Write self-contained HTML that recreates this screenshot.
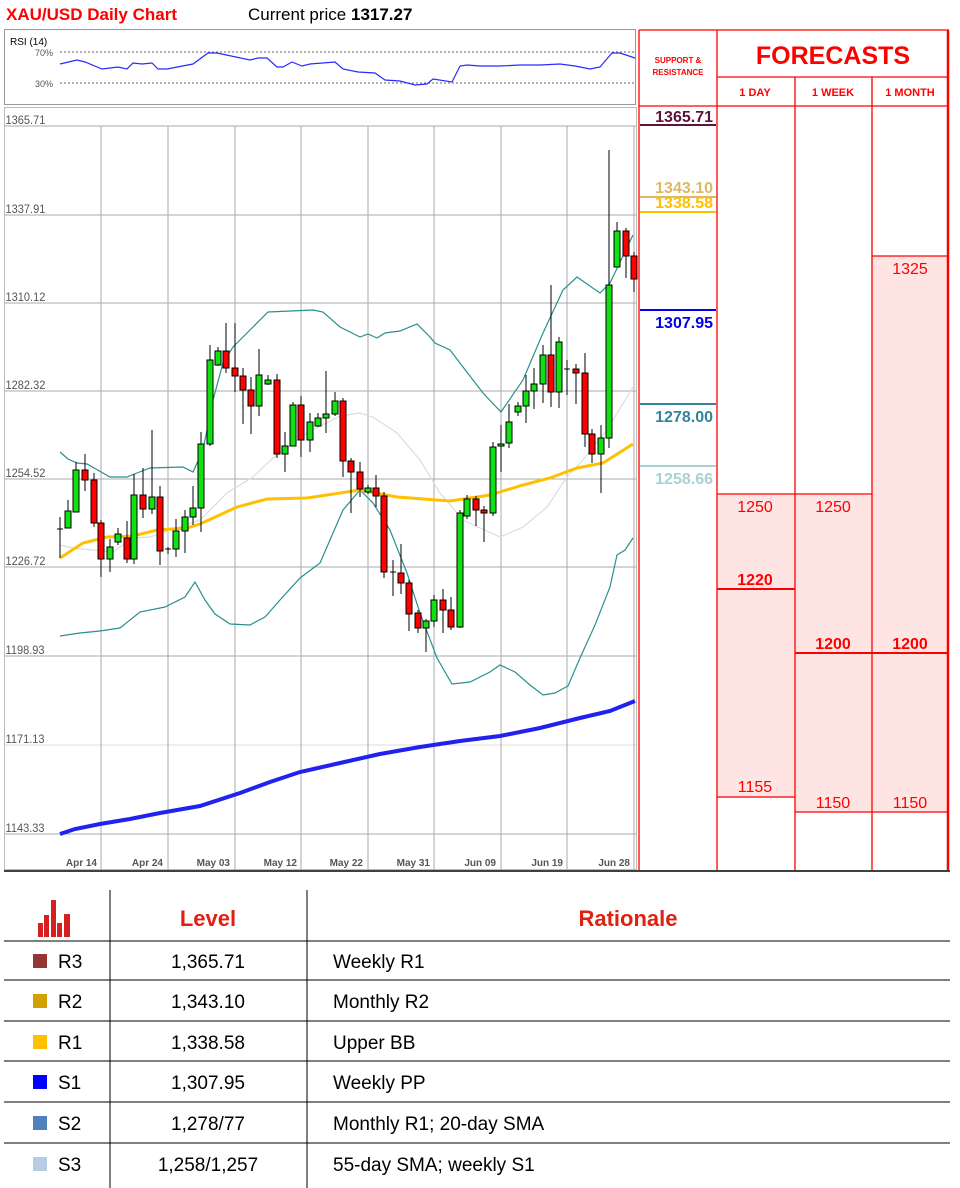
<!DOCTYPE html>
<html><head><meta charset="utf-8"><style>
html,body{margin:0;padding:0;background:#fff;}
svg{display:block;font-family:"Liberation Sans",sans-serif;}
</style></head><body>
<svg width="960" height="1188" viewBox="0 0 960 1188" xmlns="http://www.w3.org/2000/svg">
<text x="6" y="20" font-size="17" font-weight="bold" fill="#ff0000">XAU/USD Daily Chart</text>
<text x="248" y="20" font-size="17" fill="#000">Current price <tspan font-weight="bold">1317.27</tspan></text>

<!-- RSI panel -->
<rect x="4.5" y="29.5" width="631" height="75" fill="#fff" stroke="#999"/>
<text x="10" y="45" font-size="10" fill="#000">RSI (14)</text>
<text x="35" y="56" font-size="9" fill="#555">70%</text>
<text x="35" y="87" font-size="9" fill="#555">30%</text>
<line x1="60" y1="52" x2="636" y2="52" stroke="#666" stroke-dasharray="2,2"/>
<line x1="60" y1="83" x2="636" y2="83" stroke="#666" stroke-dasharray="2,2"/>
<polyline fill="none" stroke="#2a2aff" stroke-width="1.2" points="60,64 77,60 85,62 102,69 118,67 127,69 133,63 142,64 152,63 158,69 167,69 193,64 208,53 217,53 250,60 258,58 267,58 277,67 283,67 292,62 302,66 310,64 335,62 343,69 358,72 375,73 385,80 400,81 415,85 427,84 433,79 452,82 460,66 467,65 480,66 500,66 520,65 540,65 560,64 575,66 590,69 600,67 612,53 620,53 635,58"/>

<!-- Main chart -->
<rect x="4.5" y="107.5" width="632" height="762" fill="#fff" stroke="#bbb"/>
<g stroke="#aaa" stroke-width="1">
<line x1="5" y1="126" x2="636" y2="126"/><line x1="5" y1="215" x2="636" y2="215"/><line x1="5" y1="303" x2="636" y2="303"/><line x1="5" y1="391" x2="636" y2="391"/><line x1="5" y1="479" x2="636" y2="479"/><line x1="5" y1="567" x2="636" y2="567"/><line x1="5" y1="656" x2="636" y2="656"/><line x1="5" y1="745" x2="636" y2="745" stroke="#ddd"/><line x1="5" y1="834" x2="636" y2="834"/>
<line x1="101" y1="126" x2="101" y2="870"/><line x1="168" y1="126" x2="168" y2="870"/><line x1="235" y1="126" x2="235" y2="870"/><line x1="301" y1="126" x2="301" y2="870"/><line x1="368" y1="126" x2="368" y2="870"/><line x1="434" y1="126" x2="434" y2="870"/><line x1="501" y1="126" x2="501" y2="870"/><line x1="567" y1="126" x2="567" y2="870"/><line x1="634" y1="126" x2="634" y2="870"/>
</g>
<g font-size="12" fill="#555" transform="scale(0.92,1)">
<text x="6" y="124">1365.71</text><text x="6" y="213">1337.91</text><text x="6" y="301">1310.12</text><text x="6" y="389">1282.32</text><text x="6" y="477">1254.52</text><text x="6" y="565">1226.72</text><text x="6" y="654">1198.93</text><text x="6" y="743">1171.13</text><text x="6" y="832">1143.33</text>
</g>
<g font-size="10" fill="#555" text-anchor="end" font-weight="bold">
<text x="97" y="866">Apr 14</text><text x="163" y="866">Apr 24</text><text x="230" y="866">May 03</text><text x="297" y="866">May 12</text><text x="363" y="866">May 22</text><text x="430" y="866">May 31</text><text x="496" y="866">Jun 09</text><text x="563" y="866">Jun 19</text><text x="630" y="866">Jun 28</text>
</g>

<!-- indicators -->
<polyline fill="none" stroke="#dcdcdc" stroke-width="1.2" points="60,545 73,548 113,552 133,538 150,537 200,520 227,493 253,477 273,458 307,433 340,416 360,413 373,417 397,433 420,460 440,493 463,520 500,537 523,527 547,507 567,477 583,460 607,430 633,387"/>
<polyline fill="none" stroke="#2a8f8f" stroke-width="1.2" points="60,452 68,459 77,463 87,464 110,477 127,477 137,473 150,468 183,467 193,472 203,450 213,400 223,363 233,347 243,337 253,327 268,312 313,310 323,312 340,327 360,337 368,334 377,338 385,333 400,331 417,324 430,337 435,343 450,350 463,367 483,393 501,412 523,380 543,333 563,290 577,277 600,293 610,283 633,235"/>
<polyline fill="none" stroke="#2a8f8f" stroke-width="1.2" points="60,636 80,633 100,631 120,628 140,612 165,607 185,597 195,582 205,600 215,614 230,624 250,625 265,617 280,600 300,578 320,563 343,510 360,490 373,503 390,530 407,573 420,613 437,658 452,684 470,682 490,672 500,665 515,672 530,685 543,695 555,693 568,686 580,658 595,625 610,587 617,555 625,550 633,538"/>
<polyline fill="none" stroke="#ffc000" stroke-width="3" points="60,558 83,543 107,537 133,536 157,530 187,528 200,524 237,507 267,499 307,498 340,493 360,490 397,497 450,501 490,495 523,485 550,478 577,468 603,463 633,444"/>
<polyline fill="none" stroke="#2222ee" stroke-width="4" points="60,834 75,829 100,824 130,819 160,813 200,806 240,793 270,782 300,772 340,763 380,754 420,747 460,741 500,736 540,728 580,718 610,711 635,701"/>

<!-- candles -->
<g stroke="#000" stroke-width="1">
<line x1="60" y1="517" x2="60" y2="558"/><line x1="57" y1="529" x2="63" y2="529"/>
<line x1="68" y1="500" x2="68" y2="528"/><rect x="65" y="511" width="6" height="17" fill="#11e011"/>
<line x1="76" y1="462" x2="76" y2="512"/><rect x="73" y="470" width="6" height="42" fill="#11e011"/>
<line x1="85" y1="454" x2="85" y2="491"/><rect x="82" y="470" width="6" height="10" fill="#ff0000"/>
<line x1="94" y1="473" x2="94" y2="527"/><rect x="91" y="480" width="6" height="43" fill="#ff0000"/>
<line x1="101" y1="520" x2="101" y2="577"/><rect x="98" y="523" width="6" height="36" fill="#ff0000"/>
<line x1="110" y1="539" x2="110" y2="572"/><rect x="107" y="547" width="6" height="12" fill="#11e011"/>
<line x1="118" y1="528" x2="118" y2="545"/><rect x="115" y="534" width="6" height="8" fill="#11e011"/>
<line x1="127" y1="521" x2="127" y2="563"/><rect x="124" y="538" width="6" height="21" fill="#ff0000"/>
<line x1="134" y1="474" x2="134" y2="564"/><rect x="131" y="495" width="6" height="64" fill="#11e011"/>
<line x1="143" y1="468" x2="143" y2="518"/><rect x="140" y="495" width="6" height="14" fill="#ff0000"/>
<line x1="152" y1="430" x2="152" y2="514"/><rect x="149" y="497" width="6" height="12" fill="#11e011"/>
<line x1="160" y1="486" x2="160" y2="565"/><rect x="157" y="497" width="6" height="54" fill="#ff0000"/>
<line x1="168" y1="547" x2="168" y2="554"/><line x1="165" y1="549" x2="171" y2="549"/>
<line x1="176" y1="519" x2="176" y2="557"/><rect x="173" y="531" width="6" height="18" fill="#11e011"/>
<line x1="185" y1="510" x2="185" y2="553"/><rect x="182" y="517" width="6" height="14" fill="#11e011"/>
<line x1="193" y1="486" x2="193" y2="525"/><rect x="190" y="508" width="6" height="9" fill="#11e011"/>
<line x1="201" y1="432" x2="201" y2="532"/><rect x="198" y="444" width="6" height="64" fill="#11e011"/>
<line x1="210" y1="345" x2="210" y2="446"/><rect x="207" y="360" width="6" height="84" fill="#11e011"/>
<line x1="218" y1="347" x2="218" y2="366"/><rect x="215" y="351" width="6" height="14" fill="#11e011"/>
<line x1="226" y1="323" x2="226" y2="373"/><rect x="223" y="351" width="6" height="17" fill="#ff0000"/>
<line x1="235" y1="323" x2="235" y2="392"/><rect x="232" y="368" width="6" height="8" fill="#ff0000"/>
<line x1="243" y1="368" x2="243" y2="424"/><rect x="240" y="376" width="6" height="14" fill="#ff0000"/>
<line x1="251" y1="377" x2="251" y2="434"/><rect x="248" y="390" width="6" height="16" fill="#ff0000"/>
<line x1="259" y1="349" x2="259" y2="416"/><rect x="256" y="375" width="6" height="31" fill="#11e011"/>
<line x1="268" y1="375" x2="268" y2="385"/><rect x="265" y="380" width="6" height="4" fill="#11e011"/>
<line x1="277" y1="374" x2="277" y2="458"/><rect x="274" y="380" width="6" height="74" fill="#ff0000"/>
<line x1="285" y1="432" x2="285" y2="472"/><rect x="282" y="446" width="6" height="8" fill="#11e011"/>
<line x1="293" y1="402" x2="293" y2="446"/><rect x="290" y="405" width="6" height="41" fill="#11e011"/>
<line x1="301" y1="396" x2="301" y2="457"/><rect x="298" y="405" width="6" height="35" fill="#ff0000"/>
<line x1="310" y1="413" x2="310" y2="452"/><rect x="307" y="422" width="6" height="18" fill="#11e011"/>
<line x1="318" y1="413" x2="318" y2="427"/><rect x="315" y="418" width="6" height="8" fill="#11e011"/>
<line x1="326" y1="371" x2="326" y2="433"/><rect x="323" y="414" width="6" height="4" fill="#11e011"/>
<line x1="335" y1="392" x2="335" y2="416"/><rect x="332" y="401" width="6" height="13" fill="#11e011"/>
<line x1="343" y1="398" x2="343" y2="477"/><rect x="340" y="401" width="6" height="60" fill="#ff0000"/>
<line x1="351" y1="458" x2="351" y2="513"/><rect x="348" y="461" width="6" height="11" fill="#ff0000"/>
<line x1="360" y1="462" x2="360" y2="497"/><rect x="357" y="472" width="6" height="17" fill="#ff0000"/>
<line x1="368" y1="485" x2="368" y2="494"/><rect x="365" y="488" width="6" height="4" fill="#11e011"/>
<line x1="376" y1="475" x2="376" y2="507"/><rect x="373" y="488" width="6" height="8" fill="#ff0000"/>
<line x1="384" y1="492" x2="384" y2="578"/><rect x="381" y="496" width="6" height="76" fill="#ff0000"/>
<line x1="393" y1="560" x2="393" y2="596"/><line x1="390" y1="572" x2="396" y2="572"/>
<line x1="401" y1="544" x2="401" y2="594"/><rect x="398" y="573" width="6" height="10" fill="#ff0000"/>
<line x1="409" y1="580" x2="409" y2="631"/><rect x="406" y="583" width="6" height="31" fill="#ff0000"/>
<line x1="418" y1="610" x2="418" y2="633"/><rect x="415" y="613" width="6" height="15" fill="#ff0000"/>
<line x1="426" y1="619" x2="426" y2="652"/><rect x="423" y="621" width="6" height="7" fill="#11e011"/>
<line x1="434" y1="595" x2="434" y2="627"/><rect x="431" y="600" width="6" height="21" fill="#11e011"/>
<line x1="443" y1="589" x2="443" y2="633"/><rect x="440" y="600" width="6" height="10" fill="#ff0000"/>
<line x1="451" y1="597" x2="451" y2="630"/><rect x="448" y="610" width="6" height="17" fill="#ff0000"/>
<line x1="460" y1="510" x2="460" y2="628"/><rect x="457" y="513" width="6" height="114" fill="#11e011"/>
<line x1="467" y1="495" x2="467" y2="519"/><rect x="464" y="499" width="6" height="17" fill="#11e011"/>
<line x1="476" y1="496" x2="476" y2="526"/><rect x="473" y="499" width="6" height="11" fill="#ff0000"/>
<line x1="484" y1="506" x2="484" y2="542"/><rect x="481" y="510" width="6" height="3" fill="#ff0000"/>
<line x1="493" y1="442" x2="493" y2="516"/><rect x="490" y="447" width="6" height="66" fill="#11e011"/>
<line x1="501" y1="425" x2="501" y2="472"/><rect x="498" y="444" width="6" height="2" fill="#11e011"/>
<line x1="509" y1="404" x2="509" y2="448"/><rect x="506" y="422" width="6" height="21" fill="#11e011"/>
<line x1="518" y1="402" x2="518" y2="416"/><rect x="515" y="406" width="6" height="6" fill="#11e011"/>
<line x1="526" y1="375" x2="526" y2="423"/><rect x="523" y="391" width="6" height="15" fill="#11e011"/>
<line x1="534" y1="368" x2="534" y2="409"/><rect x="531" y="384" width="6" height="7" fill="#11e011"/>
<line x1="543" y1="345" x2="543" y2="403"/><rect x="540" y="355" width="6" height="29" fill="#11e011"/>
<line x1="551" y1="285" x2="551" y2="407"/><rect x="548" y="355" width="6" height="37" fill="#ff0000"/>
<line x1="559" y1="337" x2="559" y2="408"/><rect x="556" y="342" width="6" height="50" fill="#11e011"/>
<line x1="567" y1="360" x2="567" y2="395"/><line x1="564" y1="369" x2="570" y2="369"/>
<line x1="576" y1="364" x2="576" y2="404"/><rect x="573" y="369" width="6" height="4" fill="#ff0000"/>
<line x1="585" y1="353" x2="585" y2="447"/><rect x="582" y="373" width="6" height="61" fill="#ff0000"/>
<line x1="592" y1="429" x2="592" y2="463"/><rect x="589" y="434" width="6" height="20" fill="#ff0000"/>
<line x1="601" y1="425" x2="601" y2="493"/><rect x="598" y="438" width="6" height="16" fill="#11e011"/>
<line x1="609" y1="150" x2="609" y2="448"/><rect x="606" y="285" width="6" height="153" fill="#11e011"/>
<line x1="617" y1="222" x2="617" y2="267"/><rect x="614" y="231" width="6" height="36" fill="#11e011"/>
<line x1="626" y1="228" x2="626" y2="278"/><rect x="623" y="231" width="6" height="25" fill="#ff0000"/>
<line x1="634" y1="252" x2="634" y2="292"/><rect x="631" y="256" width="6" height="23" fill="#ff0000"/>
</g>

<!-- Forecast table -->
<rect x="717" y="494" width="78" height="304" fill="#ffe4e4"/>
<rect x="795" y="494" width="77" height="318" fill="#ffe4e4"/>
<rect x="872" y="256" width="76" height="556" fill="#ffe4e4"/>
<g stroke="#ff0000" stroke-width="1.3" fill="none">
<line x1="639" y1="30" x2="949" y2="30"/>
<line x1="717" y1="77" x2="949" y2="77"/>
<line x1="639" y1="106" x2="949" y2="106"/>
<line x1="639" y1="30" x2="639" y2="870"/>
<line x1="717" y1="30" x2="717" y2="870"/>
<line x1="795" y1="77" x2="795" y2="870"/>
<line x1="872" y1="77" x2="872" y2="870"/>
<line x1="717" y1="494" x2="872" y2="494"/>
<line x1="872" y1="256" x2="948" y2="256"/>
<line x1="717" y1="589" x2="795" y2="589" stroke-width="2"/>
<line x1="795" y1="653" x2="948" y2="653" stroke-width="2"/>
<line x1="717" y1="797" x2="795" y2="797"/>
<line x1="795" y1="812" x2="948" y2="812"/>
</g>
<line x1="948" y1="30" x2="948" y2="870" stroke="#ff0000" stroke-width="2.5"/>
<g fill="#ff0000" text-anchor="middle">
<text x="678" y="63" font-size="8" font-weight="bold">SUPPORT &amp;</text>
<text x="678" y="75" font-size="8" font-weight="bold">RESISTANCE</text>
<text x="833" y="64" font-size="25" font-weight="bold">FORECASTS</text>
<text x="755" y="96" font-size="11" font-weight="bold">1 DAY</text>
<text x="833" y="96" font-size="11" font-weight="bold">1 WEEK</text>
<text x="910" y="96" font-size="11" font-weight="bold">1 MONTH</text>
<g font-size="16">
<text x="910" y="274">1325</text>
<text x="755" y="512">1250</text><text x="833" y="512">1250</text>
<text x="755" y="585" font-weight="bold">1220</text>
<text x="833" y="649" font-weight="bold">1200</text><text x="910" y="649" font-weight="bold">1200</text>
<text x="755" y="792">1155</text>
<text x="833" y="808">1150</text><text x="910" y="808">1150</text>
</g>
</g>
<g font-size="16" font-weight="bold" text-anchor="end">
<text x="713" y="122" fill="#5a1438">1365.71</text>
<line x1="640" y1="125" x2="716" y2="125" stroke="#5a1438" stroke-width="2"/>
<text x="713" y="193" fill="#dcb96a">1343.10</text>
<line x1="640" y1="197" x2="716" y2="197" stroke="#dcb96a" stroke-width="2"/>
<text x="713" y="208" fill="#ffc000">1338.58</text>
<line x1="640" y1="212" x2="716" y2="212" stroke="#ffc000" stroke-width="2"/>
<line x1="640" y1="310" x2="716" y2="310" stroke="#0000ee" stroke-width="2"/>
<text x="713" y="328" fill="#0000ee">1307.95</text>
<line x1="640" y1="404" x2="716" y2="404" stroke="#31849b" stroke-width="2"/>
<text x="713" y="422" fill="#31849b">1278.00</text>
<line x1="640" y1="466" x2="716" y2="466" stroke="#a8d2d2" stroke-width="2"/>
<text x="713" y="484" fill="#a8d2d2">1258.66</text>
</g>

<!-- bottom table -->
<line x1="4" y1="871" x2="950" y2="871" stroke="#000" stroke-width="1.5"/>
<g fill="#d42020">
<rect x="38" y="923" width="5" height="14"/><rect x="44" y="915" width="5" height="22"/><rect x="51" y="900" width="5" height="37"/><rect x="57" y="923" width="5" height="14"/><rect x="64" y="914" width="6" height="23"/>
</g>
<g stroke="#000" stroke-width="1">
<line x1="110" y1="890" x2="110" y2="1188"/><line x1="307" y1="890" x2="307" y2="1188"/>
<line x1="4" y1="941" x2="950" y2="941"/><line x1="4" y1="980" x2="950" y2="980"/><line x1="4" y1="1021" x2="950" y2="1021"/><line x1="4" y1="1061" x2="950" y2="1061"/><line x1="4" y1="1102" x2="950" y2="1102"/><line x1="4" y1="1143" x2="950" y2="1143"/>
</g>
<text x="208" y="926" font-size="22" font-weight="bold" fill="#e02010" text-anchor="middle">Level</text>
<text x="628" y="926" font-size="22" font-weight="bold" fill="#e02010" text-anchor="middle">Rationale</text>
<rect x="33" y="954" width="14" height="14" fill="#943634"/>
<rect x="33" y="994" width="14" height="14" fill="#d4a000"/>
<rect x="33" y="1035" width="14" height="14" fill="#ffc000"/>
<rect x="33" y="1075" width="14" height="14" fill="#0000ff"/>
<rect x="33" y="1116" width="14" height="14" fill="#4f81bd"/>
<rect x="33" y="1157" width="14" height="14" fill="#b8cce4"/>
<g font-size="19" fill="#000">
<text x="58" y="968">R3</text><text x="58" y="1008">R2</text><text x="58" y="1049">R1</text><text x="58" y="1089">S1</text><text x="58" y="1130">S2</text><text x="58" y="1171">S3</text>
<g text-anchor="middle">
<text x="208" y="968">1,365.71</text><text x="208" y="1008">1,343.10</text><text x="208" y="1049">1,338.58</text><text x="208" y="1089">1,307.95</text><text x="208" y="1130">1,278/77</text><text x="208" y="1171">1,258/1,257</text>
</g>
<text x="333" y="968">Weekly  R1</text><text x="333" y="1008">Monthly R2</text><text x="333" y="1049">Upper BB</text><text x="333" y="1089">Weekly PP</text><text x="333" y="1130">Monthly R1; 20-day SMA</text><text x="333" y="1171">55-day SMA; weekly S1</text>
</g>
</svg>
</body></html>
